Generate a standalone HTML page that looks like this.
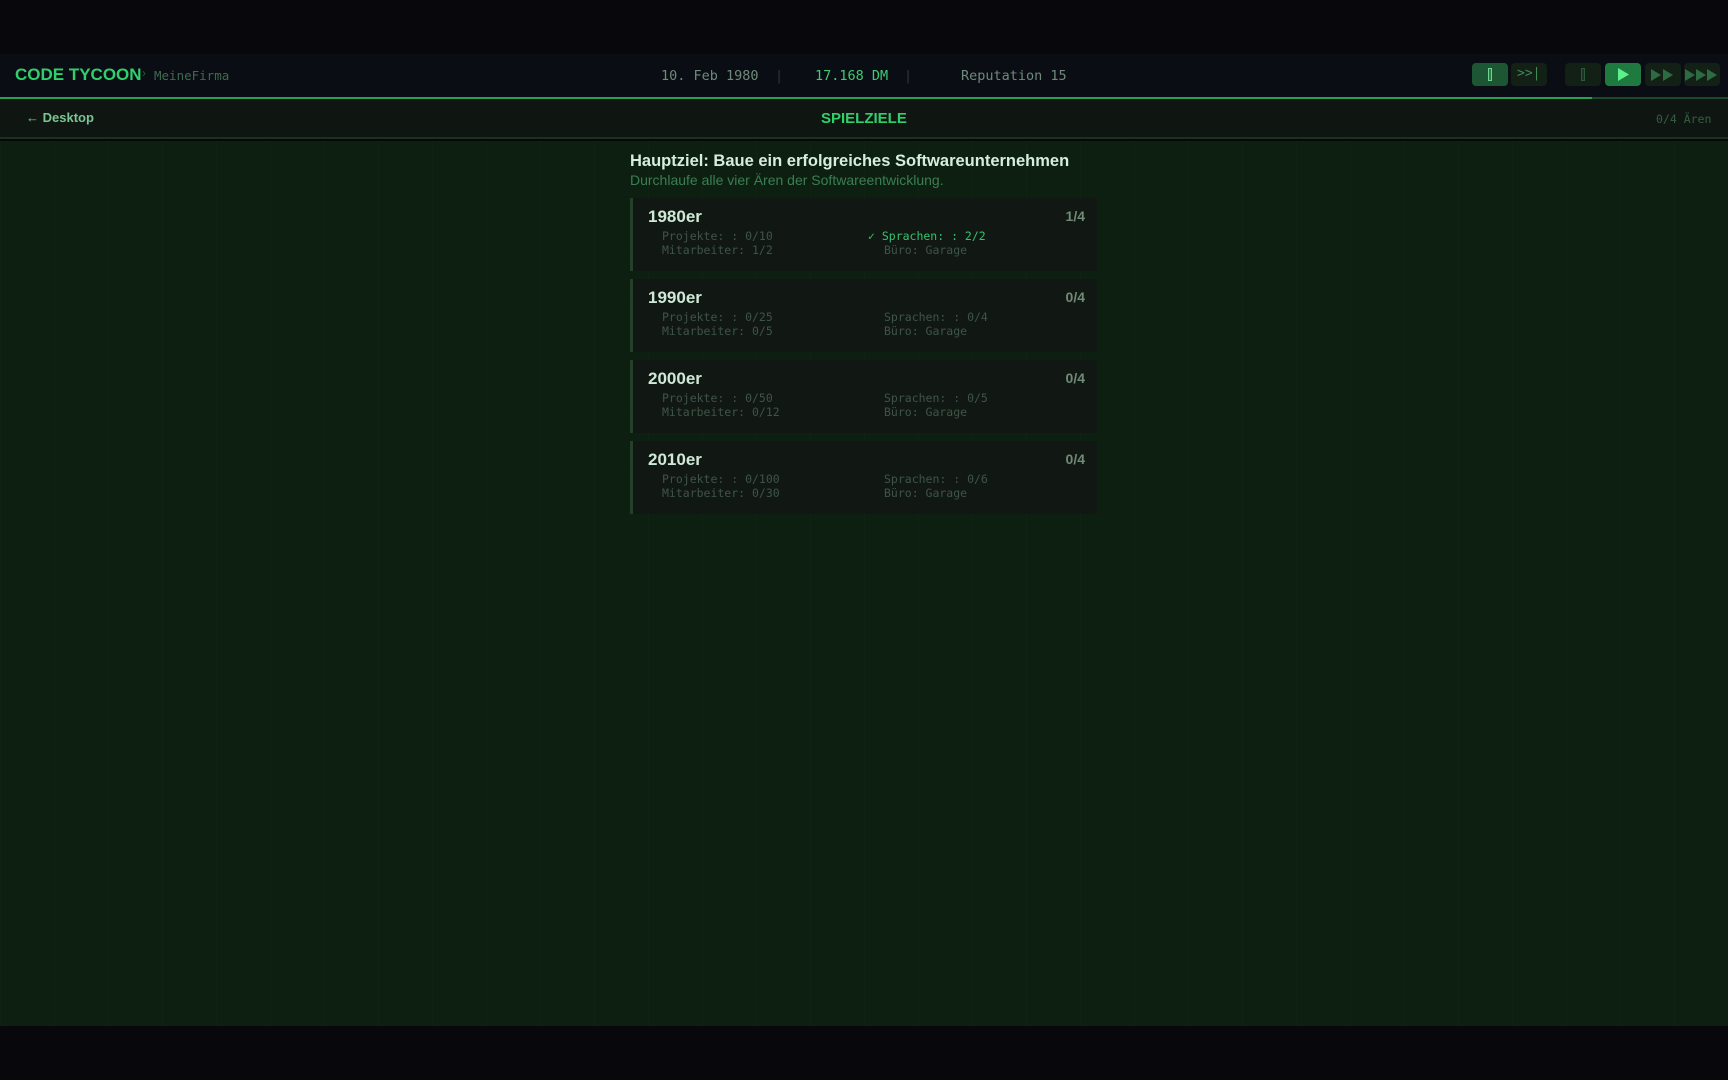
<!DOCTYPE html>
<html><head><meta charset="utf-8">
<style>
*{margin:0;padding:0;box-sizing:border-box}
body{width:1728px;height:1080px;overflow:hidden;background:#07070c;font-family:"Liberation Sans",sans-serif;position:relative}
.mono{font-family:"DejaVu Sans Mono","Liberation Mono",monospace}
#top{position:absolute;left:0;top:54px;width:1728px;height:43px;background:#0a0d14}
#prog{position:absolute;left:0;top:97px;width:1728px;height:2px;background:#1b4a2b}
#prog i{position:absolute;left:0;top:0;height:2px;width:1592px;background:#27a055}
#sub{position:absolute;left:0;top:99px;width:1728px;height:40px;background:#0f1612;border-bottom:2px solid #1a3020}
#main{position:absolute;left:0;top:141px;width:1728px;height:885px;background-color:#0d1f10;
background-image:linear-gradient(90deg,rgba(40,70,40,.10) 1px,transparent 1px),linear-gradient(0deg,rgba(40,70,40,.05) 1px,transparent 1px);background-size:54px 54px}
.t{position:absolute;white-space:nowrap}
.btn{position:absolute;top:63px;width:36px;height:23px;border-radius:4px;background:#122016}
.card{position:absolute;left:630px;width:467px;height:73px;background:#111813;border-left:3px solid #24402b}
.card h3{position:absolute;left:15px;top:9px;font-size:17px;font-weight:600;color:#cfe9d6}
.card .c{position:absolute;right:12px;top:10px;font-size:14px;font-weight:600;color:#6f8a76}
.card .d{position:absolute;font-size:11.5px;color:#3e5446;font-family:"DejaVu Sans Mono","Liberation Mono",monospace}
</style></head><body>
<div id="top"></div>
<div id="prog"><i></i></div>
<div id="sub"></div>
<div id="main"></div>

<div class="t" style="left:15px;top:65px;font-size:17px;font-weight:700;color:#2fd06b">CODE TYCOON</div>
<div class="t" style="left:142px;top:66px;font-size:12px;color:#2a5a38">›</div>
<div class="t mono" style="left:154px;top:68px;font-size:12.5px;color:#3f6a4e">MeineFirma</div>

<div class="t mono" style="left:661px;top:68px;font-size:13.5px;color:#6f8a7a">10. Feb 1980</div>
<div class="t mono" style="left:775px;top:68px;font-size:13.5px;color:#2c3a33">|</div>
<div class="t mono" style="left:815px;top:68px;font-size:13.5px;color:#3fca74">17.168 DM</div>
<div class="t mono" style="left:904px;top:68px;font-size:13.5px;color:#2c3a33">|</div>
<div class="t mono" style="left:961px;top:68px;font-size:13.5px;color:#6f8a7a">Reputation 15</div>

<div class="btn" style="left:1472px;background:#1d5632"><div style="position:absolute;left:16px;top:5px;width:4px;height:13px;border:1px solid #6fd48f;background:#2e7a46"></div></div>
<div class="btn" style="left:1511px"><div class="t mono" style="left:6px;top:3px;font-size:13px;color:#3f8a56">&gt;&gt;|</div></div>
<div class="btn" style="left:1565px"><div style="position:absolute;left:16px;top:5px;width:4px;height:13px;border:1px solid #2a5a38;background:#1a3322"></div></div>
<div class="btn" style="left:1605px;background:#1f7a40"><svg style="position:absolute;left:12px;top:5px" width="13" height="13"><path d="M1 0L12 6.5L1 13Z" fill="#5ef08a"/></svg></div>
<div class="btn" style="left:1645px"><svg style="position:absolute;left:5px;top:6px" width="26" height="12"><path d="M1 0L11 6L1 12ZM13 0L23 6L13 12Z" fill="#2e6a42"/></svg></div>
<div class="btn" style="left:1684px"><svg style="position:absolute;left:1px;top:6px" width="35" height="12"><path d="M0 0L10 6L0 12ZM11 0L21 6L11 12ZM22 0L32 6L22 12Z" fill="#2e6a42"/></svg></div>

<div class="t" style="left:26px;top:110px;font-size:13px;font-weight:600;color:#7bc493">← Desktop</div>
<div class="t" style="left:821px;top:110px;font-size:15px;font-weight:700;color:#2fd06b">SPIELZIELE</div>
<div class="t mono" style="left:1656px;top:112px;font-size:11.5px;color:#355c42">0/4 Ären</div>

<div class="t" style="left:630px;top:152px;font-size:16.5px;font-weight:600;color:#d6eedd">Hauptziel: Baue ein erfolgreiches Softwareunternehmen</div>
<div class="t" style="left:630px;top:172px;font-size:14px;color:#3a7f55">Durchlaufe alle vier Ären der Softwareentwicklung.</div>

<div class="card" style="top:198px"><h3>1980er</h3><div class="c">1/4</div>
<div class="d" style="left:29px;top:31px">Projekte: : 0/10</div><div class="d" style="left:29px;top:45px">Mitarbeiter: 1/2</div>
<div class="d" style="left:235px;top:31px;color:#32c46c">✓ Sprachen: : 2/2</div><div class="d" style="left:251px;top:45px">Büro: Garage</div></div>

<div class="card" style="top:279px"><h3>1990er</h3><div class="c">0/4</div>
<div class="d" style="left:29px;top:31px">Projekte: : 0/25</div><div class="d" style="left:29px;top:45px">Mitarbeiter: 0/5</div>
<div class="d" style="left:251px;top:31px">Sprachen: : 0/4</div><div class="d" style="left:251px;top:45px">Büro: Garage</div></div>

<div class="card" style="top:360px"><h3>2000er</h3><div class="c">0/4</div>
<div class="d" style="left:29px;top:31px">Projekte: : 0/50</div><div class="d" style="left:29px;top:45px">Mitarbeiter: 0/12</div>
<div class="d" style="left:251px;top:31px">Sprachen: : 0/5</div><div class="d" style="left:251px;top:45px">Büro: Garage</div></div>

<div class="card" style="top:441px"><h3>2010er</h3><div class="c">0/4</div>
<div class="d" style="left:29px;top:31px">Projekte: : 0/100</div><div class="d" style="left:29px;top:45px">Mitarbeiter: 0/30</div>
<div class="d" style="left:251px;top:31px">Sprachen: : 0/6</div><div class="d" style="left:251px;top:45px">Büro: Garage</div></div>
</body></html>
